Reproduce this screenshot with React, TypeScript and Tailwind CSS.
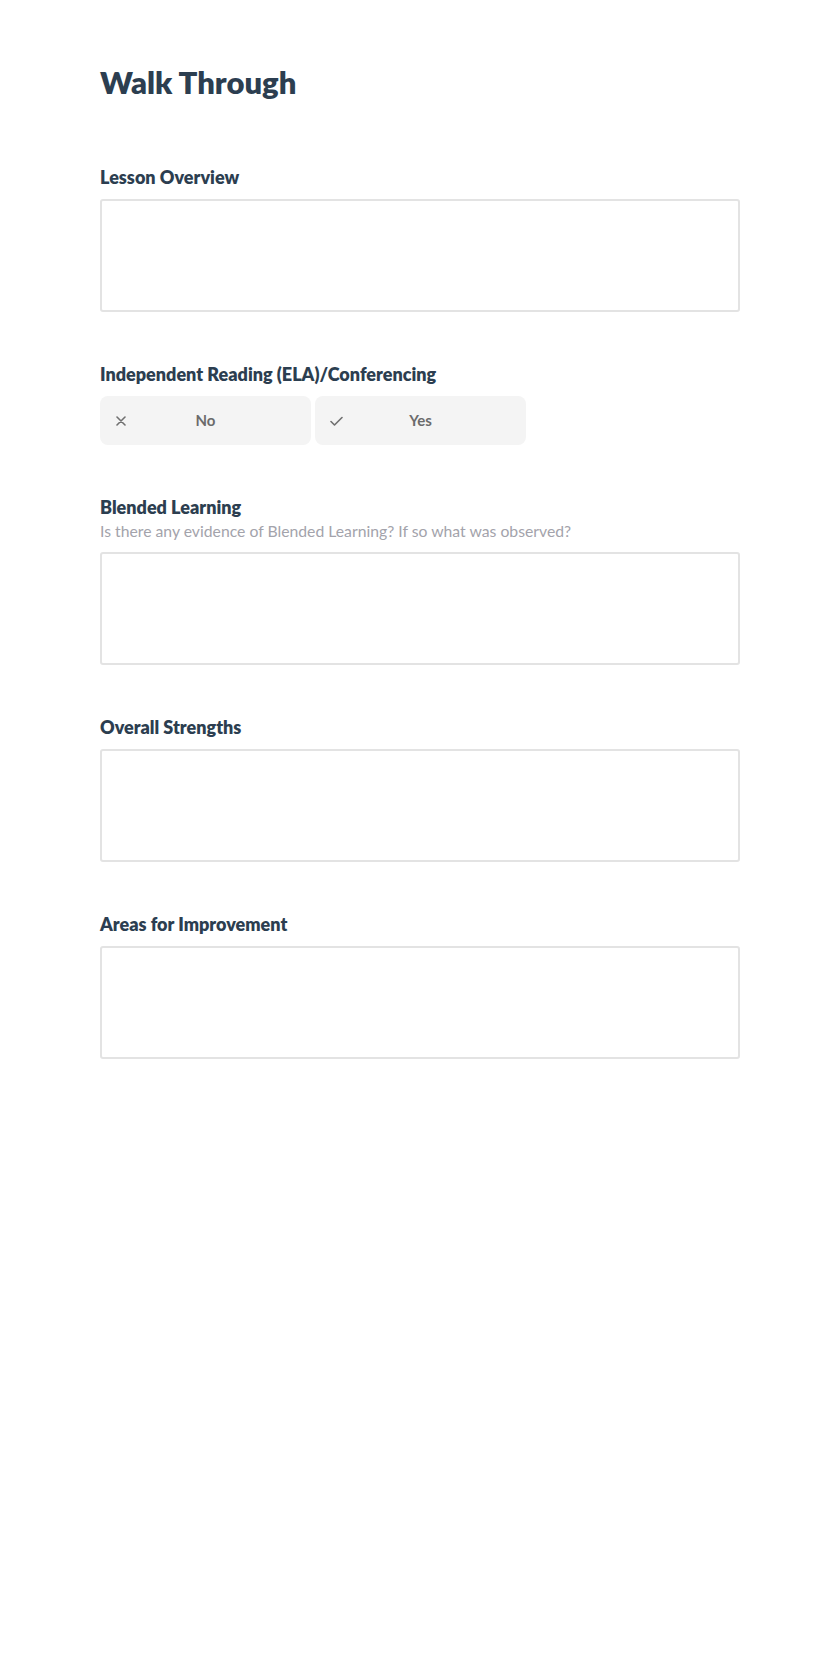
import { useState } from "react";

// Walk Through observation form
const textSections = {
  overview: { label: "Lesson Overview" },
  blended: {
    label: "Blended Learning",
    hint: "Is there any evidence of Blended Learning? If so what was observed?",
  },
  strengths: { label: "Overall Strengths" },
  improvement: { label: "Areas for Improvement" },
} as const;

function FieldLabel({ children }: { children: React.ReactNode }) {
  return (
    <h2 className="text-[18px] leading-7 font-extrabold text-[#2c3e50]">
      {children}
    </h2>
  );
}

function TextBox({ value, onChange }: { value: string; onChange: (v: string) => void }) {
  return (
    <textarea
      value={value}
      onChange={(e) => onChange(e.target.value)}
      className="block w-full h-[113px] resize-none rounded-[3px] border-2 border-[#e3e3e3] bg-white px-3 py-2 text-[15px] text-[#2c3e50] focus:outline-none"
    />
  );
}

export default function App() {
  const [values, setValues] = useState<Record<string, string>>({
    overview: "",
    blended: "",
    strengths: "",
    improvement: "",
  });
  const [reading, setReading] = useState<"no" | "yes" | null>(null);

  const setField = (key: string) => (v: string) =>
    setValues((prev) => ({ ...prev, [key]: v }));

  return (
    <div className="min-h-screen bg-white font-['Lato','Noto_Sans',sans-serif]">
      <div className="w-[640px] ml-[100px] pt-[62px]">
        <h1 className="text-[31px] leading-10 font-extrabold text-[#2c3e50] mb-[61px]">
          Walk Through
        </h1>

        <section className="mb-12">
          <div className="mb-2">
            <FieldLabel>{textSections.overview.label}</FieldLabel>
          </div>
          <TextBox value={values.overview} onChange={setField("overview")} />
        </section>

        <section className="mb-12">
          <div className="mb-2">
            <FieldLabel>Independent Reading (ELA)/Conferencing</FieldLabel>
          </div>
          <div className="flex gap-1">
            <button
              type="button"
              onClick={() => setReading("no")}
              className={`relative flex h-[49px] w-[211px] items-center justify-center rounded-lg text-[15px] font-bold text-[#6b6b6b] ${
                reading === "no" ? "bg-[#e6e6e6]" : "bg-[#f4f4f4]"
              }`}
            >
              <svg
                className="absolute left-[16px] top-1/2 -translate-y-1/2 h-[10px] w-[10px]"
                viewBox="0 0 10 10"
                fill="none"
                stroke="#707070"
                strokeWidth="1.6"
                strokeLinecap="round"
              >
                <path d="M1 1l8 8M9 1l-8 8" />
              </svg>
              No
            </button>
            <button
              type="button"
              onClick={() => setReading("yes")}
              className={`relative flex h-[49px] w-[211px] items-center justify-center rounded-lg text-[15px] font-bold text-[#6b6b6b] ${
                reading === "yes" ? "bg-[#e6e6e6]" : "bg-[#f4f4f4]"
              }`}
            >
              <svg
                className="absolute left-[15px] top-1/2 -translate-y-1/2 h-[10px] w-[13px]"
                viewBox="0 0 13 10"
                fill="none"
                stroke="#707070"
                strokeWidth="1.6"
                strokeLinecap="round"
                strokeLinejoin="round"
              >
                <path d="M1 5.5l3.5 3.5L12 1.5" />
              </svg>
              Yes
            </button>
          </div>
        </section>

        <section className="mb-12">
          <FieldLabel>{textSections.blended.label}</FieldLabel>
          <p className="text-[15.75px] leading-5 text-[#a3a3ab] mb-[11px]">
            {textSections.blended.hint}
          </p>
          <TextBox value={values.blended} onChange={setField("blended")} />
        </section>

        <section className="mb-12">
          <div className="mb-2">
            <FieldLabel>{textSections.strengths.label}</FieldLabel>
          </div>
          <TextBox value={values.strengths} onChange={setField("strengths")} />
        </section>

        <section className="mb-12">
          <div className="mb-2">
            <FieldLabel>{textSections.improvement.label}</FieldLabel>
          </div>
          <TextBox value={values.improvement} onChange={setField("improvement")} />
        </section>
      </div>
    </div>
  );
}
